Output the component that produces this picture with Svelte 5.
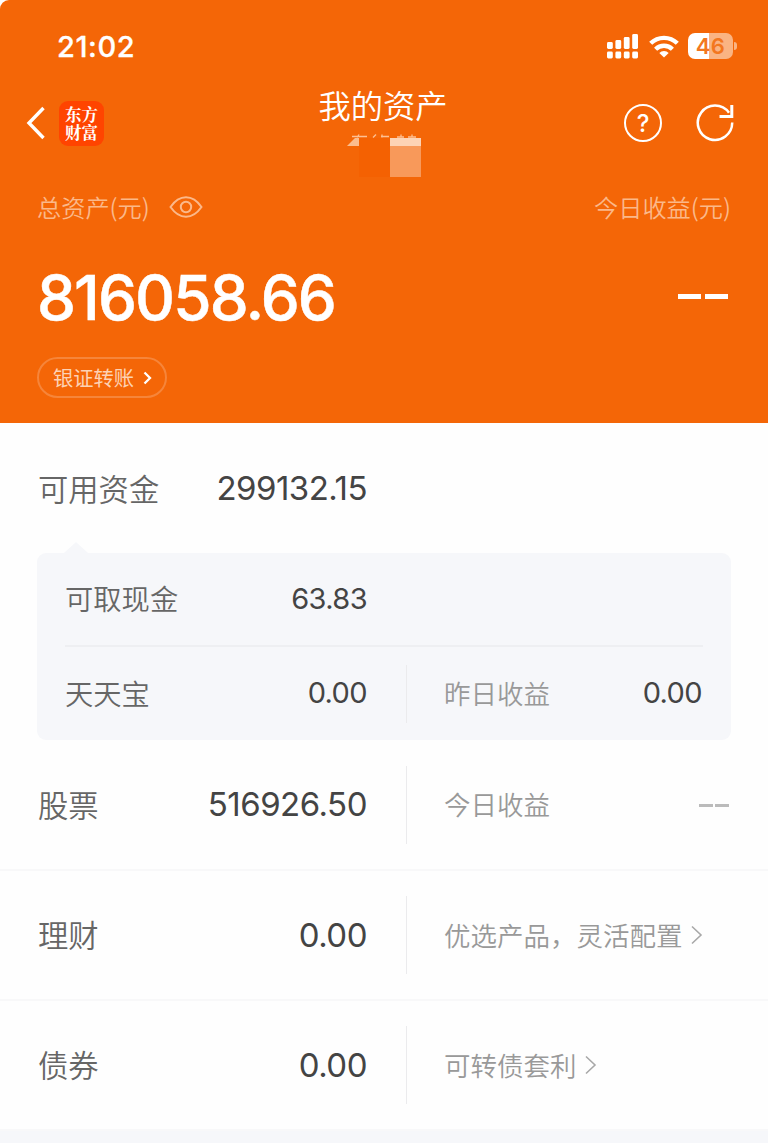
<script>
  const rows = [
    { name: '股票', value: '516926.50', note: '今日收益' },
    { name: '理财', value: '0.00', note: '优选产品，灵活配置', link: true },
    { name: '债券', value: '0.00', note: '可转债套利', link: true }
  ];
</script>

<main>
  <header>
    <div class="status">
      <span class="time">21:02</span>
      <div class="indicators">
        <svg width="32" height="26" viewBox="0 0 32 26" fill="#fff">
          <rect x="0" y="9" width="5.8" height="7" rx="1.4" /><rect x="8.4" y="7" width="5.8" height="9" rx="1.4" /><rect x="16.8" y="4" width="5.8" height="12" rx="1.4" /><rect x="25.2" y="1" width="5.8" height="15" rx="1.4" />
          <rect x="0" y="18.600" width="5.8" height="6.8" rx="1.4" /><rect x="8.4" y="18.600" width="5.8" height="6.8" rx="1.4" /><rect x="16.8" y="18.600" width="5.8" height="6.8" rx="1.4" /><rect x="25.2" y="18.600" width="5.8" height="6.8" rx="1.4" />
        </svg>
        <svg class="wifi" width="30" height="23" viewBox="0 0 30 23" fill="none" stroke="#fff" stroke-width="4.4">
          <path d="M1.700 8.300a19 19 0 0 1 26.600 0M6.600 14.200a12 12 0 0 1 16.800 0" />
          <path d="M15 22.600l-4.700-4.600a6.600 6.600 0 0 1 9.400 0z" fill="#fff" stroke="none" />
        </svg>
        <div class="battery"><span>46</span></div>
        <i class="cap"></i>
      </div>
    </div>

    <nav>
      <div class="left">
        <svg width="20" height="34" viewBox="0 0 20 34" fill="none" stroke="#fff" stroke-width="3.400"><path d="M18.500 2L4 17l14.500 15" /></svg>
        <div class="logo">东方财富</div>
      </div>
      <div class="title">
        <h1>我的资产</h1>
        <svg width="80" height="46" viewBox="0 0 80 46">
          <path d="M5 4.500h15M12 2.500l-2 3M29 2.500l-3 3M35 2.500v3M34 4.500h8M54 2.500v3M50 5h7M65 2.500v3M61 5h8" stroke="#fdc094" stroke-width="1.300" fill="none" />
          <path d="M0 14L8 6h4v8z" fill="#fbbd8e" />
          <rect x="12" y="6" width="31" height="39" fill="#f46102" />
          <rect x="43" y="6" width="31" height="8" fill="#fdd3b5" />
          <rect x="43" y="14" width="31" height="31" fill="#f8995a" />
        </svg>
      </div>
      <div class="tools">
        <div class="help">?</div>
        <svg width="40" height="40" viewBox="0 0 40 40" fill="none" stroke="#fff" stroke-width="2.500">
          <path d="M37.200 19.500A17.200 17.200 0 1 1 34 9.800" /><path d="M36.800 2v11.400H24.500" stroke-width="3" />
        </svg>
      </div>
    </nav>

    <div class="labels">
      <div class="total"><span>总资产(元)</span>
        <svg width="34" height="22" viewBox="0 0 34 22" fill="none" stroke="#fbb88a" stroke-width="2"><path d="M1.500 11C6 4.500 11 1.300 17 1.300S28 4.500 32.500 11C28 17.500 23 20.700 17 20.700S6 17.500 1.500 11z" /><circle cx="17" cy="11" r="5.200" /></svg>
      </div>
      <span>今日收益(元)</span>
    </div>
    <div class="amount"><strong>816058.66</strong><span class="dashes"><i></i><i></i></span></div>
    <div class="transfer"><span>银证转账</span>
      <svg width="9" height="14" viewBox="0 0 9 14" fill="none" stroke="#fff" stroke-width="2.300"><path d="M1.500 1.500L7 7l-5.500 5.500" /></svg>
    </div>
  </header>

  <section class="available"><span class="name">可用资金</span><span class="value">299132.15</span></section>

  <section class="card">
    <div class="cash"><span>可取现金</span><b>63.83</b></div>
    <div class="treasure"><span>天天宝</span><b>0.00</b><div class="side"><span>昨日收益</span><b>0.00</b></div></div>
  </section>

  {#each rows as row}
    <section class="row">
      <span class="name">{row.name}</span><span class="value">{row.value}</span>
      <div class="side">
        <span>{row.note}</span>
        {#if row.link}
          <svg width="12" height="20" viewBox="0 0 12 20" fill="none" stroke="#a8a8a8" stroke-width="1.600"><path d="M1 1.500l9 8.500-9 8.500" /></svg>
        {:else}
          <span class="dashes small"><i></i><i></i></span>
        {/if}
      </div>
    </section>
  {/each}
  <footer></footer>
</main>

<style>
  :global(body) { margin: 0; background: #fff; }
  main, main * { box-sizing: border-box; }
  main { width: 768px; height: 1143px; overflow: hidden; background: #fefefe; font-family: "Noto Sans CJK SC", sans-serif; font-weight: 350; color: #666; }
  svg { display: block; flex: none; }
  i { display: block; }
  header { height: 423px; background: #f46607; border-radius: 9px 0 0 0; color: #fff; overflow: hidden; }
  .status { height: 92px; display: flex; justify-content: space-between; align-items: center; padding: 0 31px 0 57px; }
  .time { font: 500 29px/40px Inter, sans-serif; letter-spacing: 0.600px; padding-top: 1px; -webkit-text-stroke: 0.3px #fff; }
  .indicators { display: flex; align-items: center; }
  .wifi { margin: 0 9px 0 10px; }
  .battery { width: 45px; height: 26px; border-radius: 7px; background: linear-gradient(90deg, #fff 46%, #fab483 46%); text-align: center; font: 600 22px/26px Inter, sans-serif; letter-spacing: 0.500px; color: #f3771f; }
  .cap { width: 3px; height: 8px; margin-left: 1px; background: #fab483; border-radius: 0 3px 3px 0; }
  nav { height: 90px; display: grid; grid-template-columns: 1fr 136px 1fr; padding: 0 33px 0 25px; }
  .left { display: flex; align-items: center; gap: 14px; height: 62px; }
  .logo { width: 45px; height: 45px; border-radius: 9px; background: #ff4400; font: 700 16.500px/18px "Noto Serif CJK SC", "Noto Sans CJK SC", serif; padding: 4px 3px 0 6px; word-break: break-all; }
  .title { display: flex; flex-direction: column; align-items: center; position: relative; left: 3px; }
  .title svg { margin-left: 8px; }
  h1 { margin: -12px 0 3px; font-size: 32.300px; line-height: 49px; font-weight: 350; white-space: nowrap; }
  .tools { display: flex; justify-content: flex-end; align-items: center; gap: 33px; height: 62px; }
  .help { width: 38px; height: 38px; border: 2.500px solid #fff; border-radius: 50%; font: 500 24px/35px Inter, sans-serif; text-align: center; }
  .labels { display: flex; justify-content: space-between; align-items: center; height: 50px; padding: 0 37px 2px 37px; font-size: 24.200px; color: #fbb88a; }
  .total { display: flex; align-items: center; gap: 19px; }
  .total svg { margin-top: 2px; }
  .amount { display: flex; justify-content: space-between; align-items: center; height: 125px; padding: 6px 40px 0 37px; }
  strong { font: 500 62px/80px Inter, sans-serif; letter-spacing: -1.900px; -webkit-text-stroke: 0.5px #fff; }
  .dashes { display: flex; gap: 4px; }
  .dashes i { width: 23px; height: 5px; background: #fff; }
  .amount .dashes { margin-top: -2px; }
  .transfer { margin-left: 37px; width: 130px; height: 41px; border: 2px solid #f6853a; border-radius: 21px; display: flex; align-items: center; gap: 9px; padding-left: 14px; font-size: 20.300px; font-weight: 400; color: #fdd2b4; }
  .transfer span { margin-top: -2px; }
  .name { width: 141px; margin-top: -2px; font-size: 30.300px; color: #666; }
  .value { width: 188px; margin-top: -1px; text-align: right; font: 400 33px/44px Inter, sans-serif; letter-spacing: -0.500px; color: #444; white-space: nowrap; }
  .available { display: flex; align-items: center; height: 130px; padding: 1px 0 0 38px; }
  .card { position: relative; width: 694px; height: 187px; margin-left: 37px; background: #f6f7fa; border-radius: 9px; padding: 0 28px; font-size: 28.300px; }
  .card::before { content: ""; position: absolute; top: -11px; left: 27px; border: solid transparent; border-width: 0 12px 11px; border-bottom-color: #f6f7fa; }
  .cash, .treasure { display: flex; align-items: center; height: 94px; }
  .cash { border-bottom: 2px solid #eeeff2; }
  .treasure { height: 93px; }
  .cash > span, .treasure > span { width: 140px; flex: none; margin-top: -3px; }
  b { width: 162px; flex: none; text-align: right; font: 400 29px/40px Inter, sans-serif; letter-spacing: -0.600px; color: #444; }
  .treasure b { margin-top: -2px; }
  .row { display: flex; align-items: center; height: 130px; padding: 0 0 0 38px; border-bottom: 2px solid #f8f8f9; }
  .available + .card + .row { height: 131px; }
  .side { display: flex; align-items: center; height: 78px; margin-left: 39px; padding-left: 37px; border-left: 1px solid #ebebed; font-size: 26.500px; color: #999; white-space: nowrap; }
  .side > span:first-child { margin-top: -2px; }
  .row .side { width: 323px; }
  .side svg { margin-left: 8px; }
  .card .side { flex: 1; height: 58px; justify-content: space-between; }
  .card .side b { width: auto; margin-right: 1px; }
  .small { margin: 2px 0 0 auto; gap: 2px; }
  .small i { width: 14px; height: 3px; background: #bbb; }
  footer { height: 12px; background: #f6f7fa; }
</style>
